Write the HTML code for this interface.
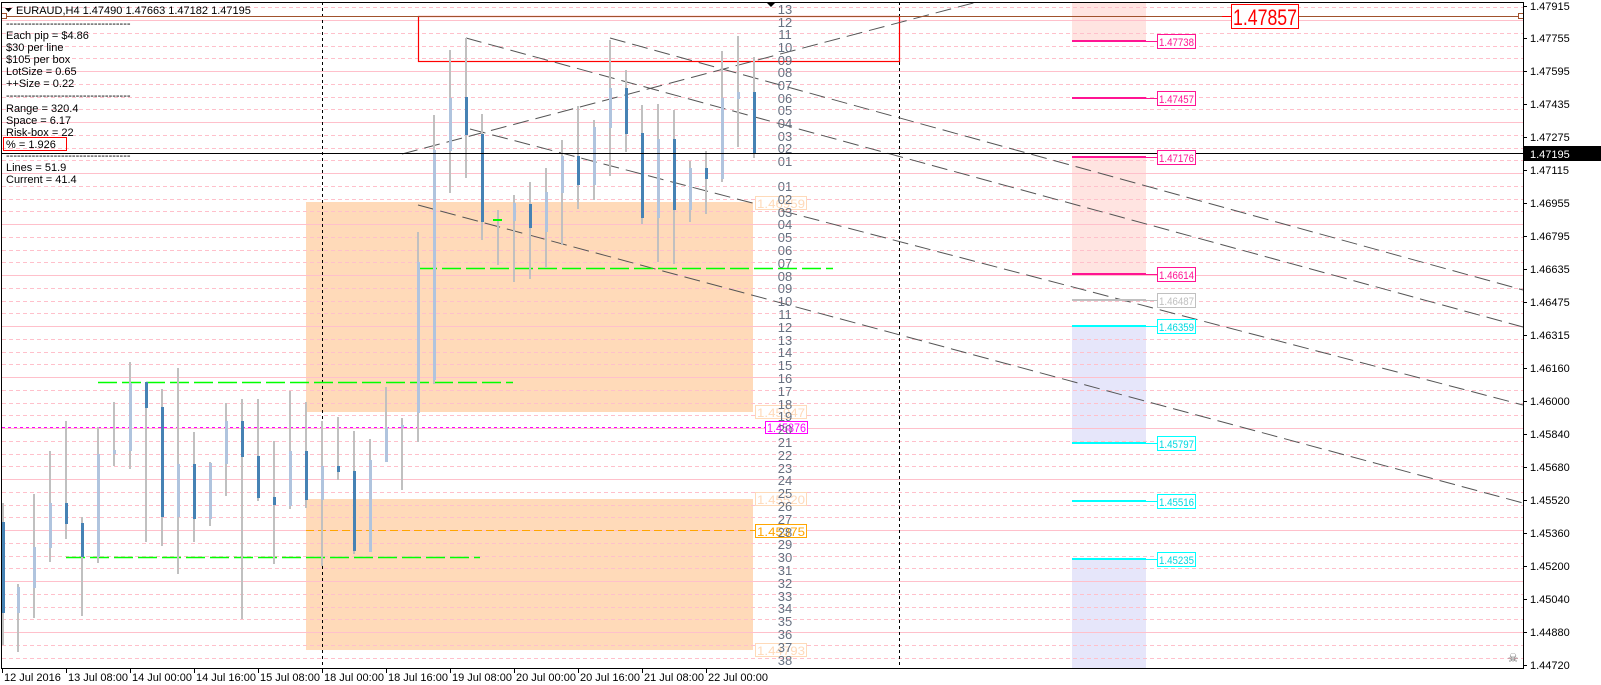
<!DOCTYPE html>
<html><head><meta charset="utf-8"><style>
html,body{margin:0;padding:0;background:#fff;width:1601px;height:685px;overflow:hidden}
svg{display:block;font-family:"Liberation Sans",sans-serif}
</style></head><body>
<svg width="1601" height="685" viewBox="0 0 1601 685" xmlns="http://www.w3.org/2000/svg">
<rect width="1601" height="685" fill="#fff"/>
<rect x="306" y="202" width="447" height="210" fill="#ffdab9"/>
<rect x="306" y="499" width="447" height="151" fill="#ffdab9"/>
<rect x="1072" y="2" width="74" height="39" fill="#ffe4e1"/>
<rect x="1072" y="157" width="74" height="117" fill="#ffe4e1"/>
<rect x="1072" y="326" width="74" height="117" fill="#e6e6fa"/>
<rect x="1072" y="559" width="74" height="109" fill="#e6e6fa"/>
<g stroke="#ffc0cb" stroke-width="1" shape-rendering="crispEdges">
<path stroke-dasharray="4 3" d="M2 7.5H1523M2 33.5H1523M2 46.5H1523M2 58.5H1523M2 84.5H1523M2 97.5H1523M2 109.5H1523M2 135.5H1523M2 148.5H1523M2 160.5H1523M2 186.5H1523M2 199.5H1523M2 211.5H1523M2 237.5H1523M2 250.5H1523M2 262.5H1523M2 288.5H1523M2 301.5H1523M2 313.5H1523M2 339.5H1523M2 352.5H1523M2 364.5H1523M2 390.5H1523M2 403.5H1523M2 415.5H1523M2 441.5H1523M2 454.5H1523M2 466.5H1523M2 492.5H1523M2 505.5H1523M2 517.5H1523M2 543.5H1523M2 556.5H1523M2 568.5H1523M2 594.5H1523M2 607.5H1523M2 619.5H1523M2 645.5H1523M2 658.5H1523"/>
<path d="M2 20.5H1523M2 71.5H1523M2 122.5H1523M2 173.5H1523M2 224.5H1523M2 275.5H1523M2 326.5H1523M2 377.5H1523M2 428.5H1523M2 479.5H1523M2 530.5H1523M2 581.5H1523M2 632.5H1523"/>
</g>
<g stroke="#000" stroke-dasharray="3 3" shape-rendering="crispEdges">
<path d="M322.5 2V668M899.5 2V668"/>
</g>
<rect x="418.5" y="16.5" width="481" height="45" fill="none" stroke="#ff0000" stroke-width="1.2"/>
<g stroke="#555" stroke-width="1" stroke-dasharray="16 7" fill="none">
<path d="M402 154L977 2"/>
<path d="M466 38L1523 327"/>
<path d="M610 38L1523 290"/>
<path d="M470 129L1523 405"/>
<path d="M418 205L1523 503"/>
</g>
<g stroke="#00ff00" stroke-width="1.5" stroke-dasharray="19 5">
<path d="M98 382.5H513M66 557.5H480M418 268.5H833"/>
</g>
<path d="M306 530.5H765" stroke="#ffa500" stroke-dasharray="8 4"/>
<path d="M2 427.5H765" stroke="#ff00ff" stroke-dasharray="3 3"/>
<g shape-rendering="crispEdges">
<g fill="#c0c0c0">
<rect x="2" y="503" width="2" height="142"/><rect x="17" y="584" width="2" height="68"/><rect x="33" y="494" width="2" height="124"/><rect x="49" y="451" width="2" height="111"/><rect x="65" y="421" width="2" height="118"/><rect x="81" y="517" width="2" height="99"/><rect x="97" y="427" width="2" height="136"/><rect x="113" y="402" width="2" height="64"/><rect x="129" y="362" width="2" height="107"/><rect x="145" y="382" width="2" height="160"/><rect x="161" y="389" width="2" height="157"/><rect x="177" y="368" width="2" height="206"/><rect x="193" y="432" width="2" height="110"/><rect x="209" y="462" width="2" height="64"/><rect x="225" y="403" width="2" height="93"/><rect x="241" y="399" width="2" height="220"/><rect x="257" y="399" width="2" height="102"/><rect x="273" y="441" width="2" height="123"/><rect x="289" y="391" width="2" height="118"/><rect x="305" y="402" width="2" height="106"/><rect x="321" y="421" width="2" height="145"/><rect x="337" y="417" width="2" height="63"/><rect x="353" y="431" width="2" height="123"/><rect x="369" y="439" width="2" height="113"/><rect x="385" y="387" width="2" height="75"/><rect x="401" y="418" width="2" height="72"/><rect x="417" y="232" width="2" height="210"/><rect x="433" y="115" width="2" height="269"/><rect x="449" y="50" width="2" height="143"/><rect x="465" y="38" width="2" height="140"/><rect x="481" y="114" width="2" height="126"/><rect x="497" y="210" width="2" height="55"/><rect x="513" y="195" width="2" height="87"/><rect x="529" y="182" width="2" height="97"/><rect x="545" y="168" width="2" height="100"/><rect x="561" y="140" width="2" height="105"/><rect x="577" y="106" width="2" height="103"/><rect x="593" y="120" width="2" height="80"/><rect x="609" y="40" width="2" height="136"/><rect x="625" y="70" width="2" height="82"/><rect x="641" y="105" width="2" height="119"/><rect x="657" y="104" width="2" height="158"/><rect x="673" y="110" width="2" height="154"/><rect x="689" y="161" width="2" height="61"/><rect x="705" y="151" width="2" height="63"/><rect x="721" y="51" width="2" height="131"/><rect x="737" y="36" width="2" height="111"/><rect x="753" y="57" width="2" height="101"/>
</g>
<g fill="#4682b4">
<rect x="2" y="522" width="3" height="91"/><rect x="65" y="503" width="3" height="21"/><rect x="81" y="523" width="3" height="34"/><rect x="145" y="382" width="3" height="26"/><rect x="161" y="407" width="3" height="110"/><rect x="193" y="464" width="3" height="55"/><rect x="241" y="421" width="3" height="36"/><rect x="257" y="456" width="3" height="42"/><rect x="273" y="497" width="3" height="8"/><rect x="305" y="451" width="3" height="49"/><rect x="337" y="466" width="3" height="6"/><rect x="353" y="471" width="3" height="80"/><rect x="465" y="97" width="3" height="38"/><rect x="481" y="134" width="3" height="88"/><rect x="497" y="219" width="3" height="2"/><rect x="529" y="204" width="3" height="24"/><rect x="577" y="156" width="3" height="29"/><rect x="625" y="88" width="3" height="46"/><rect x="641" y="133" width="3" height="85"/><rect x="673" y="139" width="3" height="71"/><rect x="705" y="168" width="3" height="11"/><rect x="753" y="92" width="3" height="61"/>
</g>
<g fill="#b0c4de">
<rect x="17" y="587" width="3" height="26"/><rect x="33" y="547" width="3" height="41"/><rect x="49" y="503" width="3" height="45"/><rect x="97" y="454" width="3" height="103"/><rect x="113" y="450" width="3" height="4"/><rect x="129" y="383" width="3" height="68"/><rect x="177" y="464" width="3" height="53"/><rect x="209" y="463" width="3" height="56"/><rect x="225" y="421" width="3" height="43"/><rect x="289" y="451" width="3" height="55"/><rect x="321" y="466" width="3" height="34"/><rect x="369" y="460" width="3" height="92"/><rect x="385" y="427" width="3" height="35"/><rect x="401" y="425" width="3" height="3"/><rect x="417" y="262" width="3" height="151"/><rect x="433" y="150" width="3" height="230"/><rect x="449" y="98" width="3" height="53"/><rect x="513" y="203" width="3" height="18"/><rect x="545" y="192" width="3" height="40"/><rect x="561" y="156" width="3" height="37"/><rect x="593" y="127" width="3" height="58"/><rect x="609" y="88" width="3" height="40"/><rect x="657" y="139" width="3" height="79"/><rect x="689" y="168" width="3" height="42"/><rect x="721" y="98" width="3" height="81"/><rect x="737" y="92" width="3" height="7"/>
</g>
<rect x="493" y="219" width="9" height="2" fill="#00ff00"/>
</g>
<path d="M2 16.5H1523" stroke="#a0522d" stroke-width="1"/>
<rect x="1.5" y="13.5" width="5" height="5" fill="#fff" stroke="#a0522d"/>
<rect x="1518.5" y="13.5" width="5" height="5" fill="#fff" stroke="#a0522d"/>
<path d="M2 153.5H1523" stroke="#000" stroke-width="1"/>
<g stroke-width="2">
<path d="M1072 41H1146M1072 98H1146M1072 157H1146M1072 274H1146" stroke="#ff1493"/>
<path d="M1072 300H1146" stroke="#c0c0c0"/>
<path d="M1072 326H1146M1072 443H1146M1072 501H1146M1072 559H1146" stroke="#00ffff"/>
</g>
<g stroke-width="1">
<path d="M1146 41.5H1157M1146 98.5H1157M1146 157.5H1157M1146 274.5H1157" stroke="#ff1493"/>
<path d="M1146 300.5H1157" stroke="#c0c0c0"/>
<path d="M1146 326.5H1157M1146 443.5H1157M1146 501.5H1157M1146 559.5H1157" stroke="#00ffff"/>
</g>
<g fill="#fff">
<rect x="1157.5" y="34.5" width="38" height="14" stroke="#ff1493"/><rect x="1157.5" y="91.5" width="38" height="14" stroke="#ff1493"/><rect x="1157.5" y="150.5" width="38" height="14" stroke="#ff1493"/><rect x="1157.5" y="267.5" width="38" height="14" stroke="#ff1493"/>
<rect x="1157.5" y="293.5" width="38" height="14" stroke="#c0c0c0"/>
<rect x="1157.5" y="319.5" width="38" height="14" stroke="#00ffff"/><rect x="1157.5" y="436.5" width="38" height="14" stroke="#00ffff"/><rect x="1157.5" y="494.5" width="38" height="14" stroke="#00ffff"/><rect x="1157.5" y="552.5" width="38" height="14" stroke="#00ffff"/>
</g>
<g font-size="11">
<g fill="#ff1493"><text x="1159" y="46" textLength="35" lengthAdjust="spacingAndGlyphs">1.47738</text><text x="1159" y="103" textLength="35" lengthAdjust="spacingAndGlyphs">1.47457</text><text x="1159" y="162" textLength="35" lengthAdjust="spacingAndGlyphs">1.47176</text><text x="1159" y="279" textLength="35" lengthAdjust="spacingAndGlyphs">1.46614</text></g>
<text x="1159" y="305" fill="#c0c0c0" textLength="35" lengthAdjust="spacingAndGlyphs">1.46487</text>
<g fill="#00d8e0"><text x="1159" y="331" textLength="35" lengthAdjust="spacingAndGlyphs">1.46359</text><text x="1159" y="448" textLength="35" lengthAdjust="spacingAndGlyphs">1.45797</text><text x="1159" y="506" textLength="35" lengthAdjust="spacingAndGlyphs">1.45516</text><text x="1159" y="564" textLength="35" lengthAdjust="spacingAndGlyphs">1.45235</text></g>
</g>
<path d="M1222 16.5H1231" stroke="#ff0000"/>
<rect x="1231.5" y="4.5" width="67" height="24" fill="#fff" stroke="#ff0000"/>
<text x="1233" y="25" font-size="22" fill="#ff0000" textLength="64" lengthAdjust="spacingAndGlyphs">1.47857</text>
<g fill="#fff" stroke="#ffdab9">
<rect x="755.5" y="196.5" width="51" height="13"/><rect x="755.5" y="405.5" width="51" height="13"/><rect x="755.5" y="492.5" width="51" height="13"/><rect x="755.5" y="643.5" width="51" height="13"/>
</g>
<rect x="755.5" y="524.5" width="51" height="13" fill="#fff" stroke="#ffa500"/>
<rect x="765.5" y="421.5" width="42" height="12" fill="#fff" stroke="#ff00ff"/>
<g font-size="12">
<g fill="#ffdab9"><text x="757" y="208" textLength="48" lengthAdjust="spacingAndGlyphs">1.46959</text><text x="757" y="417" textLength="48" lengthAdjust="spacingAndGlyphs">1.45947</text><text x="757" y="504" textLength="48" lengthAdjust="spacingAndGlyphs">1.45520</text><text x="757" y="655" textLength="48" lengthAdjust="spacingAndGlyphs">1.44793</text></g>
<text x="757" y="536" fill="#ffa500" textLength="48" lengthAdjust="spacingAndGlyphs">1.45375</text>
<text x="767" y="432" fill="#ff00ff" textLength="39" lengthAdjust="spacingAndGlyphs">1.45876</text>
</g>
<g font-size="13" fill="#667080" text-anchor="middle">
<text x="785" y="14">13</text><text x="785" y="27">12</text><text x="785" y="39">11</text><text x="785" y="52">10</text><text x="785" y="65">09</text><text x="785" y="77">08</text><text x="785" y="90">07</text><text x="785" y="103">06</text><text x="785" y="115">05</text><text x="785" y="128">04</text><text x="785" y="141">03</text><text x="785" y="153">02</text><text x="785" y="166">01</text>
<text x="785" y="191">01</text><text x="785" y="204">02</text><text x="785" y="217">03</text><text x="785" y="229">04</text><text x="785" y="242">05</text><text x="785" y="255">06</text><text x="785" y="268">07</text><text x="785" y="281">08</text><text x="785" y="293">09</text><text x="785" y="306">10</text><text x="785" y="319">11</text><text x="785" y="332">12</text><text x="785" y="345">13</text><text x="785" y="357">14</text><text x="785" y="370">15</text><text x="785" y="383">16</text><text x="785" y="396">17</text><text x="785" y="409">18</text><text x="785" y="421">19</text><text x="785" y="434">20</text><text x="785" y="447">21</text><text x="785" y="460">22</text><text x="785" y="473">23</text><text x="785" y="485">24</text><text x="785" y="498">25</text><text x="785" y="511">26</text><text x="785" y="524">27</text><text x="785" y="537">28</text><text x="785" y="549">29</text><text x="785" y="562">30</text><text x="785" y="575">31</text><text x="785" y="588">32</text><text x="785" y="601">33</text><text x="785" y="613">34</text><text x="785" y="626">35</text><text x="785" y="639">36</text><text x="785" y="652">37</text><text x="785" y="665">38</text>
</g>
<g font-size="11" fill="#000">
<text x="16" y="14">EURAUD,H4  1.47490 1.47663 1.47182 1.47195</text>
<text x="6" y="27">----------------------------------</text>
<text x="6" y="39">Each pip = $4.86</text>
<text x="6" y="51">$30 per line</text>
<text x="6" y="63">$105 per box</text>
<text x="6" y="75">LotSize = 0.65</text>
<text x="6" y="87">++Size = 0.22</text>
<text x="6" y="99">----------------------------------</text>
<text x="6" y="112">Range = 320.4</text>
<text x="6" y="124">Space = 6.17</text>
<text x="6" y="136">Risk-box = 22</text>
<text x="6" y="148">% = 1.926</text>
<text x="6" y="159">----------------------------------</text>
<text x="6" y="171">Lines = 51.9</text>
<text x="6" y="183">Current = 41.4</text>
</g>
<path d="M5 8h7l-3.5 4z" fill="#000"/>
<rect x="3.5" y="137.5" width="63" height="13" fill="none" stroke="#ff0000"/>
<path d="M767 3h8l-4 4z" fill="#000"/>
<g stroke="#000" fill="none" shape-rendering="crispEdges">
<path d="M1.5 2.5H1523.5V668.5H1.5Z"/>
</g>
<rect x="1524" y="146" width="77" height="15" fill="#000"/>
<g stroke="#000" shape-rendering="crispEdges">
<path d="M1523 6.5h4M1523 38.5h4M1523 71.5h4M1523 104.5h4M1523 137.5h4M1523 170.5h4M1523 203.5h4M1523 236.5h4M1523 269.5h4M1523 302.5h4M1523 335.5h4M1523 368.5h4M1523 401.5h4M1523 434.5h4M1523 467.5h4M1523 500.5h4M1523 533.5h4M1523 566.5h4M1523 599.5h4M1523 632.5h4M1523 665.5h4"/>
<path d="M2.5 668v5M66.5 668v5M130.5 668v5M194.5 668v5M258.5 668v5M322.5 668v5M386.5 668v5M450.5 668v5M514.5 668v5M578.5 668v5M642.5 668v5M706.5 668v5"/>
</g>
<g font-size="11" fill="#000">
<text x="1530" y="10">1.47915</text><text x="1530" y="42">1.47755</text><text x="1530" y="75">1.47595</text><text x="1530" y="108">1.47435</text><text x="1530" y="141">1.47275</text><text x="1530" y="174">1.47115</text><text x="1530" y="207">1.46955</text><text x="1530" y="240">1.46795</text><text x="1530" y="273">1.46635</text><text x="1530" y="306">1.46475</text><text x="1530" y="339">1.46315</text><text x="1530" y="372">1.46160</text><text x="1530" y="405">1.46000</text><text x="1530" y="438">1.45840</text><text x="1530" y="471">1.45680</text><text x="1530" y="504">1.45520</text><text x="1530" y="537">1.45360</text><text x="1530" y="570">1.45200</text><text x="1530" y="603">1.45040</text><text x="1530" y="636">1.44880</text><text x="1530" y="669">1.44720</text>
<text x="1530" y="158" fill="#fff">1.47195</text>
<text x="4" y="681">12 Jul 2016</text><text x="68" y="681">13 Jul 08:00</text><text x="132" y="681">14 Jul 00:00</text><text x="196" y="681">14 Jul 16:00</text><text x="260" y="681">15 Jul 08:00</text><text x="324" y="681">18 Jul 00:00</text><text x="388" y="681">18 Jul 16:00</text><text x="452" y="681">19 Jul 08:00</text><text x="516" y="681">20 Jul 00:00</text><text x="580" y="681">20 Jul 16:00</text><text x="644" y="681">21 Jul 08:00</text><text x="708" y="681">22 Jul 00:00</text>
</g>
<text x="1513" y="662" font-size="12" fill="#666" text-anchor="middle">☠</text>
</svg>
</body></html>
